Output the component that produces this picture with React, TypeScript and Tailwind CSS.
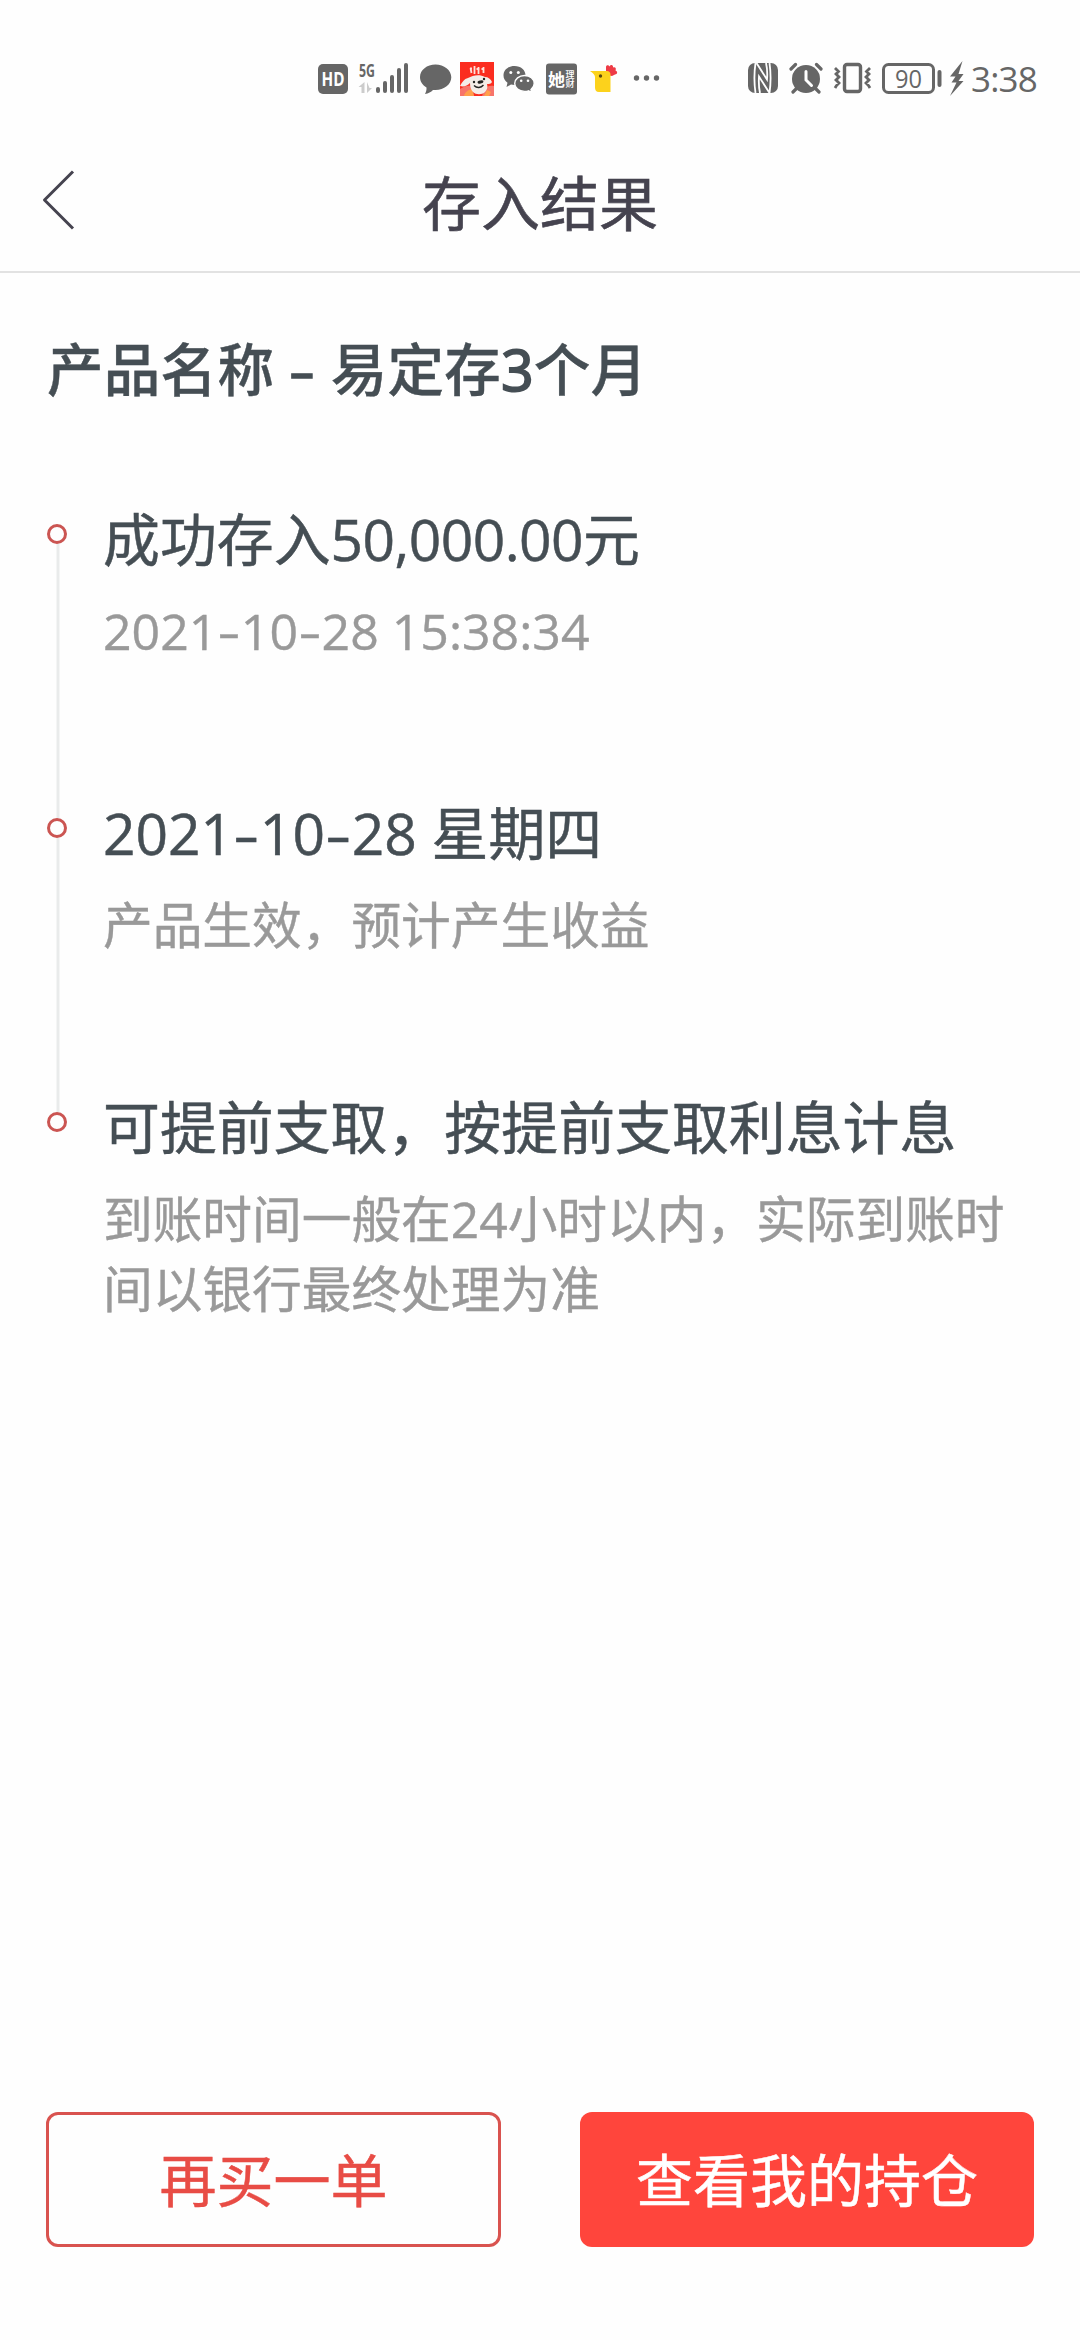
import type { ReactNode } from "react";

const ICON = "#666666";

function Dash() {
  return (
    <span className="inline-block w-[0.47em] text-center">
      <span className="inline-block scale-x-[1.42]">-</span>
    </span>
  );
}

function withDashes(text: string) {
  return text
    .split("-")
    .flatMap((part, i) => (i === 0 ? [part] : [<Dash key={i} />, part]));
}

function StatusBar() {
  return (
    <div className="flex h-[106px] items-start pt-[60px] pl-[318px]">
      <svg width="30" height="38" viewBox="0 0 30 38" className="shrink-0 overflow-visible">
        <rect y="4" width="30" height="30" rx="5" fill={ICON} />
        <text x="15" y="26" textAnchor="middle" textLength="23" lengthAdjust="spacingAndGlyphs" fontFamily="Open Sans, sans-serif" fontWeight="700" fontSize="19" fill="#fff">HD</text>
      </svg>
      <svg width="52" height="38" viewBox="0 0 52 38" className="ml-[10px] shrink-0 overflow-visible">
        <text x="1" y="16.500" textLength="16" lengthAdjust="spacingAndGlyphs" fontFamily="Open Sans, sans-serif" fontWeight="700" fontSize="18" fill={ICON}>5G</text>
        <path d="M6.500 22v11h-3v-6h-3zM9 22v11l5-5h-2.500z" fill="#cccccc" />
        <g fill={ICON}>
          <rect x="18" y="27" width="4" height="6" rx="2" />
          <rect x="25" y="21" width="4" height="12" rx="2" />
          <rect x="32" y="15" width="4" height="18" rx="2" />
          <rect x="39" y="8" width="4" height="25" rx="2" />
          <rect x="46" y="3" width="4" height="30" rx="2" />
        </g>
      </svg>
      <svg width="32" height="38" viewBox="0 0 32 38" className="ml-[10px] shrink-0">
        <path d="M15.500 4.500C7 4.500 0 10 0 17c0 4.500 2.500 8 6.500 10.500.2 2.500-.5 4.500-1.500 6.500 3.500-.5 6-2 8-4h2.500c8.600 0 15.800-5.500 15.800-12.700S24 4.500 15.500 4.500z" fill={ICON} />
      </svg>
      <svg width="34" height="38" viewBox="0 0 34 38" className="ml-[8px] shrink-0">
        <rect y="2" width="34" height="34" fill="#fb2d20" />
        <path d="M0 29c4-3 8-4 12-3l2 10H0zM34 26c-4-1-7 0-9 3l-3 7h12z" fill="#f7746a" />
        <path d="M4 36c1-4 4-6 8-7l2 7zM24 36l3-6 4 2-2 4z" fill="#ffa04a" />
        <path d="M10.500 8l1 5M14.500 6v8M18.500 7v7M23.500 7v6M10 8.500h2M16.500 9h3M21.500 9h2" stroke="#ffe0d8" strokeWidth="1.800" />
        <path d="M8 18c-4 1-6 4-8 8 4 1 7 0 10-3 0 4 1 7 3 9 3 3 9 3 12 0 2-2 3-5 2-8 2 0 4 0 5-2-1-3-4-5-7-5-5-3-12-2-17 1z" fill="#f4ece8" />
        <circle cx="14" cy="22" r="1.200" fill="#222" />
        <circle cx="24" cy="19" r="1.200" fill="#222" />
        <ellipse cx="20.500" cy="22" rx="3" ry="1.600" fill="#222" transform="rotate(-10 20.500 22)" />
        <path d="M14 25.500c3 3 7 2.500 9.500-.5" stroke="#222" strokeWidth="1.300" fill="none" />
      </svg>
      <svg width="32" height="38" viewBox="0 0 32 38" className="ml-[9px] shrink-0">
        <path d="M11.500 6C5 6 .5 10 .5 15.500c0 3 1.500 5.500 4 7.200L3.500 27l4.500-2.500c1.200.3 2.300.5 3.500.5C18 25 22.500 21 22.500 15.500S18 6 11.500 6z" fill={ICON} />
        <path d="M21.500 15.500c5.500 0 9.700 3.500 9.700 8 0 2.500-1.200 4.500-3.200 6l.7 3-3.200-1.700c-1.300.4-2.600.6-4 .6-5.500 0-9.800-3.500-9.800-7.900s4.300-8 9.800-8z" fill={ICON} stroke="#fff" strokeWidth="1.400" />
        <g fill="#fff">
          <circle cx="7.800" cy="12.500" r="1.500" />
          <circle cx="15.300" cy="12.500" r="1.500" />
          <circle cx="18.200" cy="20.800" r="1.300" />
          <circle cx="25" cy="20.800" r="1.300" />
        </g>
      </svg>
      <svg width="32" height="38" viewBox="0 0 32 38" className="ml-[11px] shrink-0 overflow-visible">
        <rect y="3.500" width="31" height="31" rx="3" fill={ICON} />
        <g fill="#fff" fontFamily="Noto Sans CJK SC, sans-serif">
          <text x="2" y="25.500" fontSize="17" fontWeight="700">她</text>
          <text x="19.500" y="18" fontSize="9" fontWeight="500">理</text>
          <text x="19.500" y="27" fontSize="9" fontWeight="500">财</text>
        </g>
      </svg>
      <svg width="28" height="38" viewBox="0 0 28 38" className="ml-[12px] shrink-0">
        <path d="M16 15V7c0-2 2.500-2.500 3.500-.5 1.500-2.500 4-1.500 3.500 1 2.500-.8 3.500 1 2.500 3 2.500.8 2 4-.5 4l-3 1.500z" fill="#ee3b46" />
        <path d="M0 11h17c2 0 3.500 1.500 3.500 3.500V32H9c-3 0-4-2-4-4.500V17c0-2-2-4-5-6z" fill="#fcd21c" />
        <circle cx="10.500" cy="16" r="1.700" fill="#5b4a12" />
      </svg>
      <svg width="28" height="38" viewBox="0 0 28 38" className="ml-[15px] shrink-0" fill={ICON}>
        <circle cx="3.500" cy="18" r="2.700" />
        <circle cx="13.500" cy="18" r="2.700" />
        <circle cx="23.500" cy="18" r="2.700" />
      </svg>
      <svg width="30" height="38" viewBox="0 0 30 38" className="ml-[87px] shrink-0">
        <rect y="3" width="30" height="30" rx="7" fill={ICON} />
        <path d="M7.500 3c-1.300 9-1.300 21 0 30" stroke="#fff" strokeWidth="1.800" fill="none" />
        <path d="M8.500 3L19 19.500c.5-5.500.3-11-1-16.500" stroke="#fff" strokeWidth="1.800" fill="none" />
        <path d="M12 33c-1.200-5.500-1.400-11-1-16.500L21.500 33c1.300-9 1.300-21 0-30" stroke="#fff" strokeWidth="1.800" fill="none" />
      </svg>
      <svg width="34" height="38" viewBox="0 0 34 38" className="ml-[11px] shrink-0">
        <circle cx="17" cy="19" r="14" fill={ICON} />
        <path d="M2 9l4.500-4.500M32 9l-4.500-4.500M7 29l-3 3M27 29l3 3" stroke={ICON} strokeWidth="3.200" strokeLinecap="round" />
        <path d="M17 11.500V20l5.500 5.500" stroke="#fff" strokeWidth="3" strokeLinecap="round" fill="none" />
      </svg>
      <svg width="40" height="38" viewBox="0 0 40 38" className="ml-[9px] shrink-0" fill="none" stroke={ICON}>
        <rect x="12.500" y="4.500" width="16" height="27" rx="2.500" strokeWidth="3.400" />
        <path d="M3 8l3.500 3.500L4 14l3 3-3 3 3 3-2.500 2.500L3 28M38 8l-3.500 3.500L37 14l-3 3 3 3-3 3 2.500 2.500L38 28" strokeWidth="2.800" />
      </svg>
      <svg width="62" height="38" viewBox="0 0 62 38" className="ml-[10px] shrink-0 overflow-visible">
        <rect x="1.500" y="4.500" width="50" height="28" rx="5" fill="none" stroke={ICON} strokeWidth="3" />
        <rect x="55.500" y="10" width="4" height="17" rx="2" fill={ICON} />
        <text x="26.500" y="27.500" textAnchor="middle" textLength="27" lengthAdjust="spacingAndGlyphs" fontFamily="Open Sans, sans-serif" fontSize="26" fill={ICON}>90</text>
      </svg>
      <svg width="16" height="38" viewBox="0 0 16 38" className="ml-[6px] shrink-0">
        <path d="M12.500 1L0 16.500h5.500L1.500 22.500h5L0 36l13.500-15H8.500l5-7h-5z" fill={ICON} />
      </svg>
      <span className="ml-[5px] text-[35px] leading-[38px] tracking-[-0.800px] text-[#666666]">3:38</span>
    </div>
  );
}

function Header() {
  return (
    <header className="flex h-[167px] items-center border-b-2 border-[#e2e2e2] px-[42px] pt-[30px]">
      <svg width="34" height="64" viewBox="0 0 34 64" className="-mt-[7px] shrink-0" fill="none" stroke="#45434f" strokeWidth="3">
        <path d="M31 3.500L2.500 32 31 60.500" strokeLinejoin="round" />
      </svg>
      <h1 className="mr-[34px] -mt-[2px] flex-1 text-center text-[59px] leading-[80px] text-[#45434f] [-webkit-text-stroke:0.6px_#45434f]">存入结果</h1>
    </header>
  );
}

interface StepProps {
  title: ReactNode;
  last?: boolean;
  children: ReactNode;
}

function Step({ title, last, children }: StepProps) {
  return (
    <li className={last ? "flex" : "flex h-[294px]"}>
      <div className="flex w-[20px] shrink-0 flex-col items-center">
        <span className="h-[20px] w-[20px] shrink-0 rounded-full border-3 border-[#cb5552]" />
        {!last && <span className="w-[3px] flex-1 translate-x-[0.500px] bg-[#e9ebeb]" />}
      </div>
      <div className="-mt-[25px] ml-[36px]">
        <h3 className="text-[56.900px] leading-[80px] whitespace-nowrap text-[#454e54] [-webkit-text-stroke:0.5px_#454e54]">{title}</h3>
        <p className="mt-[17px] text-[49.700px] leading-[70px] text-[#999999] [-webkit-text-stroke:0.4px_#999999]">{children}</p>
      </div>
    </li>
  );
}

export default function App() {
  return (
    <div
      lang="zh-CN"
      className="flex h-[2340px] w-[1080px] flex-col bg-[#fefefe] font-['Open_Sans','Noto_Sans_CJK_SC',sans-serif]"
    >
      <StatusBar />
      <Header />
      <main className="flex-1 px-[47px] pt-[57px]">
        <h2 className="text-[56.500px] leading-[80px] font-medium tracking-[0.300px] text-[#454e54] [-webkit-text-stroke:0.4px_#454e54]">
          产品名称 <span className="[-webkit-text-stroke:1.500px_#454e54]"><Dash /></span> 易定存
          <span className="[-webkit-text-stroke:2px_#454e54]">3</span>个月
        </h2>
        <ul className="mt-[114px]">
          <Step title={<>成功存入<span className="tracking-[-0.550px]">50,000.00</span>元</>}>
            <span className="text-[50px]">{withDashes("2021-10-28 15:38:34")}</span>
          </Step>
          <Step title={withDashes("2021-10-28 星期四")}>产品生效，预计产生收益</Step>
          <Step title="可提前支取，按提前支取利息计息" last>
            到账时间一般在24小时以内，实际到账时
            <br />
            间以银行最终处理为准
          </Step>
        </ul>
      </main>
      <footer className="flex gap-[79px] px-[46px] pb-[93px]">
        <button className="h-[135px] w-[455px] rounded-[12px] border-3 border-[#d9534f] pt-[2px] text-[57px] text-[#e84c45] [-webkit-text-stroke:0.5px_#e84c45]">再买一单</button>
        <button className="h-[135px] w-[454px] rounded-[12px] bg-[#ff453c] pt-[2px] text-[57px] text-white [-webkit-text-stroke:0.5px_#ffffff]">查看我的持仓</button>
      </footer>
    </div>
  );
}
